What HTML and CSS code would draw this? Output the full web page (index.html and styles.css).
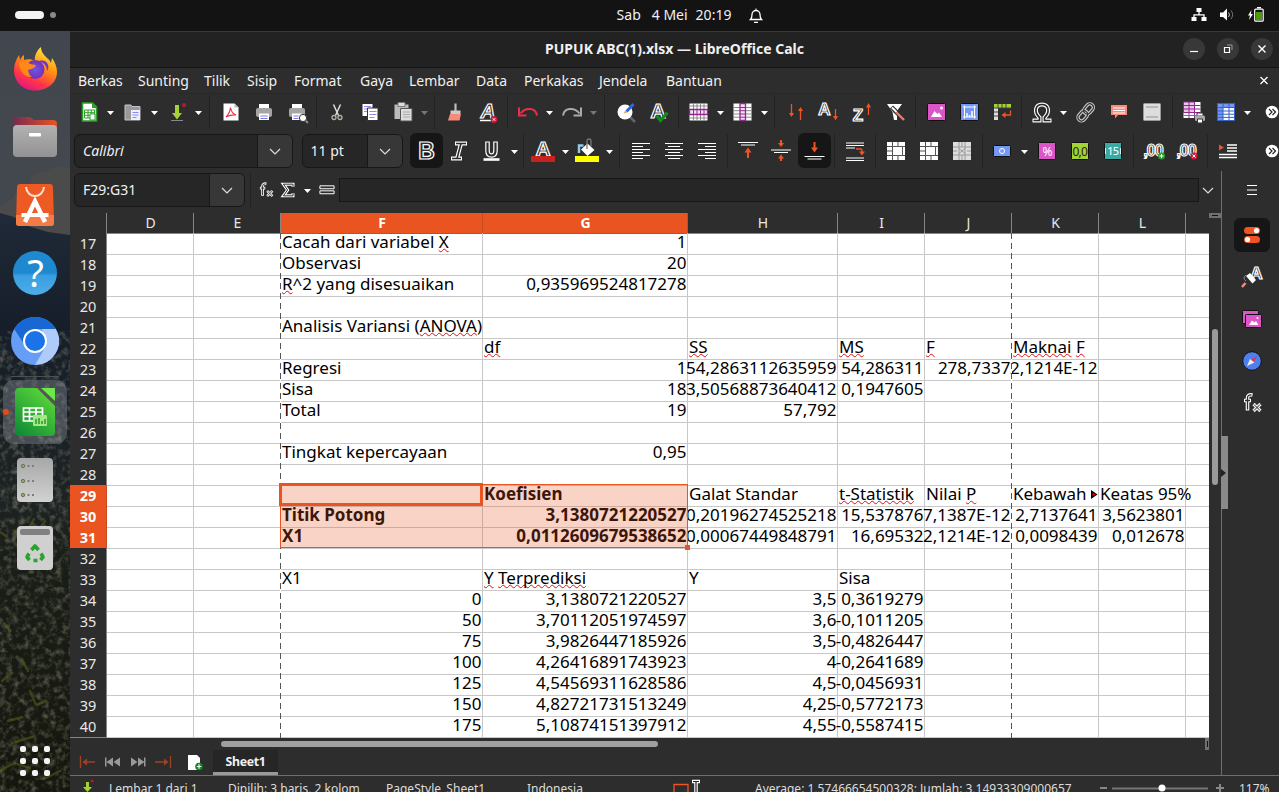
FILE: index.html
```
<!DOCTYPE html>
<html lang="id">
<head>
<meta charset="utf-8">
<title>PUPUK ABC(1).xlsx — LibreOffice Calc</title>
<link rel="stylesheet" href="styles.css">
</head>
<body>
<svg width="0" height="0" class="defs">
  <symbol id="dd" viewBox="0 0 11 24"><path d="M2 11h7l-3.500 4z" fill="currentColor"/></symbol>
  <symbol id="chev" viewBox="0 0 14 14"><path d="M2 5l5 5 5-5" fill="none" stroke="#ddd" stroke-width="1.200"/></symbol>
  <symbol id="merge" viewBox="0 0 24 24"><path d="M3 3h18v18H3z" fill="#fff"/><path d="M3 7.500h18M3 16.500h18M8.500 3v18M3 12h5.500M14 3v4.500M14 16.500V21M18.500 7.500v9" stroke="#555" fill="none"/><path d="M9 8h9v8H9z" fill="#fff"/></symbol>
  <symbol id="more" viewBox="0 0 14 14"><circle cx="7" cy="7" r="6.300" fill="#fff"/><path d="M4 4l3 3-3 3M7.500 4l3 3-3 3" fill="none" stroke="#222" stroke-width="1.200"/></symbol>
</svg>
<header class="topbar">
  <div class="pips"><i class="pill"></i><i class="dot"></i></div>
  <div class="clock"><span>Sab</span><span>4 Mei</span><span>20:19</span>
    <svg width="14" height="16" viewBox="0 0 14 16"><path d="M1.500 11.500h11c-1.500-1.500-1.500-3-1.500-5a4 4 0 0 0-8 0c0 2 0 3.500-1.500 5zM5 14.300h4" fill="none" stroke="#fff" stroke-width="1.300"/><path d="M7 .5v2" stroke="#fff"/></svg></div>
  <div class="tray">
    <svg width="16" height="16" viewBox="0 0 16 16"><path d="M5.500 1h5v4h-5zM.5 10h5v4h-5zM10.500 10h5v4h-5z" fill="#fff"/><path d="M8 5v3M3 10V7.800h10V10" fill="none" stroke="#fff" stroke-width="1.300"/></svg>
    <svg width="16" height="16" viewBox="0 0 16 16"><path d="M1 5.500h3L8 1.500v12L4 10H1z" fill="#fff"/><path d="M9.500 5.500q2 2.300 0 4.600" fill="none" stroke="#ccc"/><path d="M12 3.500q3.300 4.200 0 8.500" fill="none" stroke="#777"/></svg>
    <svg width="18" height="16" viewBox="0 0 18 16"><path d="M4.500 3L1 8.500h2L2 13l4-6H3.800z" fill="#fff"/><rect x="7.700" y="2.200" width="8.500" height="12" rx="1" fill="none" stroke="#fff" stroke-width="1.200"/><path d="M10 .7h4" stroke="#fff" stroke-width="1.500"/><path d="M9 5h6v8H9z" fill="#4e9a06"/></svg>
  </div>
</header>
<div class="desktop">
<aside class="dock">
  <svg class="wall" width="70" height="761" viewBox="0 0 70 761">
    <defs>
      <linearGradient id="sky" x1="0" y1="0" x2="0" y2="1"><stop offset="0" stop-color="#42474f"/><stop offset="1" stop-color="#4a4a4a"/></linearGradient>
      <linearGradient id="hill" x1="0" y1="0" x2="0" y2="1"><stop offset="0" stop-color="#202a38"/><stop offset=".2" stop-color="#161e2a"/><stop offset=".5" stop-color="#1d2323"/><stop offset=".6" stop-color="#1a1e18"/><stop offset="1" stop-color="#15160e"/></linearGradient>
      <filter id="noise" x="0" y="0" width="1" height="1"><feTurbulence type="fractalNoise" baseFrequency=".16" numOctaves="4" seed="4"/><feColorMatrix values="0 0 0 0 .25 0 0 0 0 .26 0 0 0 0 .17 1.300 0 0 0 -.58"/></filter>
    </defs>
    <rect width="70" height="761" fill="url(#sky)"/>
    <path d="M0 175q12-4 16-14 10 2 14-8 4-14 14-12 12-8 26-4v70H0z" fill="#4c4b4c"/>
    <path d="M0 182l14 4 14 9 20 6 22 3V761H0z" fill="url(#hill)"/>
    <rect y="300" width="70" height="461" filter="url(#noise)"/>
    <path d="M6 505l-6-4M14 500l8 6 10-3M34 488l-8 14 14-5 5-7M10 600l-6-8M2 650l10-8M30 660l6 14 10-4M8 690l14-4M12 712l20-6M0 740l14-8 16 5M44 748l16-8M28 640l-6-12" stroke="#525a18" stroke-width="2.500" stroke-linecap="round" fill="none" opacity=".6"/>
  </svg>
  <div class="dock-items">
  <div class="app"><svg width="48" height="48" viewBox="0 0 48 48">
    <defs><linearGradient id="ff" x1=".8" y1="0" x2=".3" y2="1"><stop offset="0" stop-color="#fff44f"/><stop offset=".4" stop-color="#ff980e"/><stop offset=".75" stop-color="#ff3647"/><stop offset="1" stop-color="#e31587"/></linearGradient><radialGradient id="fp"><stop offset="0" stop-color="#6b57e8"/><stop offset="1" stop-color="#7630b8"/></radialGradient></defs>
    <path d="M24 45.500C12 45.500 3 37 3 25c0-6 2-10 5-15l1 5c1-2 2-4 4-5v5c3-1 8-1 11 1-1-5 2-11 6-14 0 5 3 8 6 11 2 1 3 3 4 5l1-5c3 4 5 9 5 14 0 11-10 18.500-22 18.500z" fill="url(#ff)"/><circle cx="24" cy="24.500" r="9.500" fill="url(#fp)"/><path d="M8 18c5-2 8-2 11 1l6 1c-1 3-4 4-8 5 1 3 1 5 4 7-7 1-12-5-13-14z" fill="#ff8a16"/><path d="M26 17c5-1 10 3 10 9 4-5-1-14-10-9z" fill="#7a35c4"/></svg></div>
  <div class="app"><svg width="48" height="48" viewBox="0 0 48 48"><defs><linearGradient id="fo"><stop offset="0" stop-color="#772953"/><stop offset="1" stop-color="#e95420"/></linearGradient><linearGradient id="gr" x1="0" y1="0" x2="0" y2="1"><stop offset="0" stop-color="#b2b2b2"/><stop offset="1" stop-color="#929292"/></linearGradient></defs><path d="M2 8q0-4 4-4h13l4 3h19q4 0 4 4v12H2z" fill="url(#fo)"/><rect x="2" y="12" width="44" height="32" rx="4" fill="url(#gr)"/><rect x="18" y="20" width="12" height="3.500" rx="1" fill="#fff"/></svg></div>
  <div class="app"><svg width="48" height="48" viewBox="0 0 48 48"><path d="M9 3h30q3 0 3 4l1 35q0 3-3 3H8q-3 0-3-3L6 7q0-4 3-4z" fill="#ee5a24"/><path d="M5 34h38v8q0 3-3 3H8q-3 0-3-3z" fill="#f57b45"/><path d="M15 6c1 12 17 12 18 0" fill="none" stroke="#ffe0d0" stroke-width="2"/><path d="M14 41L24 20.500 34 41" fill="none" stroke="#fff" stroke-width="4.500"/><path d="M10.500 34h27" stroke="#fff" stroke-width="4"/></svg></div>
  <div class="app"><svg width="48" height="48" viewBox="0 0 48 48"><defs><linearGradient id="he" x1="0" y1="0" x2="0" y2="1"><stop offset=".5" stop-color="#1f89d0"/><stop offset=".56" stop-color="#3a9ee0"/><stop offset="1" stop-color="#4caee8"/></linearGradient></defs><circle cx="24" cy="24" r="22" fill="url(#he)"/><text x="24.500" y="37.500" text-anchor="middle" class="qmark">?</text></svg></div>
  <div class="app"><svg width="48" height="48" viewBox="0 0 48 48"><circle cx="24" cy="24" r="24" fill="#669df6"/><path d="M3.200 12A24 24 0 0 1 44.800 12H24L13 27z" fill="#1967d2"/><path d="M44.800 12A24 24 0 0 1 24 48L35 29 31 12z" fill="#aecbfa"/><circle cx="24" cy="24" r="12" fill="#fff"/><circle cx="24" cy="24" r="10" fill="#1a73e8"/></svg></div>
  <div class="app active"><svg width="48" height="48" viewBox="0 0 48 48"><defs><linearGradient id="lc" x1=".8" y1="0" x2=".1" y2="1"><stop offset="0" stop-color="#5fd93a"/><stop offset="1" stop-color="#0d8a35"/></linearGradient></defs><path d="M4 4q0-4 4-4h22l14 17v27q0 4-4 4H8q-4 0-4-4z" fill="url(#lc)"/><path d="M26 0l18 18v-5L31 0z" fill="#555"/><path d="M30 0h14v13z" fill="#6ee74a"/><path d="M12.500 20h19v13h-19zM12.500 24h19M12.500 28.500h19M18.500 20v13M25 20v13" fill="none" stroke="#fff" stroke-width="1.700"/><rect x="22" y="27" width="14" height="11" rx="1" fill="#a5e887"/><path d="M25 36v-5M28 36v-6M31 36v-3M34 36v-5" stroke="#23992f" stroke-width="1.500"/></svg></div>
  <div class="app"><svg width="48" height="48" viewBox="0 0 48 48"><defs><linearGradient id="gr2" x1="0" y1="0" x2="0" y2="1"><stop offset="0" stop-color="#a7a7a7"/><stop offset="1" stop-color="#d2d2d2"/></linearGradient></defs><rect x="6" y="2" width="36" height="44" rx="4" fill="url(#gr2)"/><g fill="#91a869" stroke="#6d7456"><circle cx="12" cy="10" r="1.700"/><circle cx="12" cy="25" r="1.700"/><circle cx="12" cy="39" r="1.700"/></g><path d="M16.500 10h2M21 10h2M16.500 25h2M21 25h2M16.500 39h2M21 39h2" stroke="#7d7d7d" stroke-width="1.800"/></svg></div>
  <div class="app"><svg width="48" height="48" viewBox="0 0 48 48"><rect x="6" y="2" width="36" height="44" rx="4" fill="#d0d0d0"/><rect x="9" y="5" width="30" height="6" rx="2" fill="#808080"/><path d="M20.500 26l3.500-4 3.500 4M30 29.500l2 3.500-2.500 3M18 29.500L16 33l2.500 3M26.500 36.500h-4" fill="none" stroke="#29a329" stroke-width="3.600" stroke-linejoin="round"/></svg></div>
  <div class="grid9"><i></i><i></i><i></i><i></i><i></i><i></i><i></i><i></i><i></i></div>
  </div>
</aside>
<main class="win">
  <div class="title"><b>PUPUK ABC(1).xlsx — LibreOffice Calc</b>
    <div class="wbtns"><i><svg width="10" height="10" viewBox="0 0 10 10"><path d="M1 7.500h8" stroke="#fff" stroke-width="1.200"/></svg></i><i><svg width="10" height="10" viewBox="0 0 10 10"><path d="M1.500 3.500h5v5h-5z" fill="none" stroke="#fff" stroke-width="1.200"/><path d="M4 1h5v5" fill="none" stroke="#999"/></svg></i><i><svg width="10" height="10" viewBox="0 0 10 10"><path d="M1.500 1.500l7 7M8.500 1.500l-7 7" stroke="#fff" stroke-width="1.400"/></svg></i></div></div>
  <nav class="menu"><span>Berkas</span><span>Sunting</span><span>Tilik</span><span>Sisip</span><span>Format</span><span>Gaya</span><span>Lembar</span><span>Data</span><span>Perkakas</span><span>Jendela</span><span>Bantuan</span><svg width="10" height="10" viewBox="0 0 10 10"><path d="M1.500 1l7 7M8.500 1l-7 7" stroke="#fff" stroke-width="1.300"/></svg></nav>

  <div class="bar bar1">
    <svg class="ic" viewBox="0 0 24 24"><path d="M5.500 3h10l4 4v14h-14z" fill="#fff" stroke="#2e9e2e" stroke-width="1.600"/><path d="M15 3v5h5z" fill="#2e9e2e"/><path d="M7.500 10h10v8h-10zM7.500 12.700h10M7.500 15.300h10M11 10v8M14.300 10v8" fill="none" stroke="#2e9e2e"/><path d="M13 14h5v6h-5z" fill="#fff" stroke="#2e9e2e"/></svg><svg class="dd"><use href="#dd"/></svg>
    <svg class="ic" viewBox="0 0 24 24"><path d="M4 5h6l1 1.500h8V20H4z" fill="#999" stroke="#c4c4c4"/><path d="M10 10h9v10h-9z" fill="#eef"/><path d="M11.500 12.500h6M11.500 15h6M11.500 17.500h4" stroke="#8a8af0"/></svg><svg class="dd"><use href="#dd"/></svg>
    <svg class="ic" viewBox="0 0 24 24"><path d="M10 5h4v8h3l-5 6.500L7 13h3z" fill="#a2d234"/><path d="M6 20.500h12" stroke="#888"/><circle cx="19" cy="5" r="2" fill="#c01530"/></svg><svg class="dd"><use href="#dd"/></svg>
    <i class="sep s10"></i>
    <svg class="ic" viewBox="0 0 24 24"><path d="M4.500 3.500h11l4 4v13h-15z" fill="#fff"/><path d="M15.500 3.500v4h4z" fill="#bbb"/><path d="M7 17q4-4 4.500-9.500 1 6 5.500 7.500-5-.5-10 2" fill="none" stroke="#e8304a" stroke-width="1.200"/></svg>
    <svg class="ic" viewBox="0 0 24 24"><path d="M7 4h10v5H7z" fill="#fff"/><rect x="4" y="8" width="16" height="9" rx="2" fill="#a5a5a5"/><path d="M7 13.500h10V20H7z" fill="#fff"/><path d="M8.500 16h7M8.500 18.500h7" stroke="#7b7be8"/></svg>
    <svg class="ic" viewBox="0 0 24 24"><path d="M7 4h10v5H7z" fill="#fff"/><rect x="4" y="8" width="16" height="9" rx="2" fill="#a5a5a5"/><path d="M7 13.500h10V20H7z" fill="#fff"/><path d="M8.500 16h5M8.500 18.500h5" stroke="#7b7be8"/><path d="M19 19l4 4" stroke="#888" stroke-width="2"/><circle cx="18" cy="18" r="3.600" fill="#fff" stroke="#333"/></svg>
    <i class="sep s7"></i>
    <svg class="ic" viewBox="0 0 24 24"><path d="M8.500 4.500l5 11M15.500 4.500l-5 11" stroke="#ddd" stroke-width="1.500"/><circle cx="9" cy="17.500" r="2" fill="none" stroke="#b8b0a0" stroke-width="1.300"/><circle cx="15" cy="17.500" r="2" fill="none" stroke="#b8b0a0" stroke-width="1.300"/></svg>
    <svg class="ic" viewBox="0 0 24 24"><path d="M4.500 4h10v12h-10z" fill="#fff"/><path d="M6 6.500h7M6 9h4M6 11.500h3" stroke="#8a8af0"/><path d="M9.500 8h10.500v12.500H9.500z" fill="#fff" stroke="#333"/><path d="M11.500 11.500h7M11.500 14.500h7M11.500 17.500h5" stroke="#8a8af0"/></svg>
    <svg class="ic" viewBox="0 0 24 24"><path d="M3.500 4.500h14V19h-14z" fill="#bbb"/><path d="M7 2.500h7v4H7z" fill="#ddd" stroke="#777"/><path d="M9.500 8.500h11.500V21H9.500z" fill="#ddd" stroke="#555"/><path d="M12 12h7M12 14.500h7M12 17h7" stroke="#aaa"/></svg><svg class="dd dim"><use href="#dd"/></svg>
    <i class="sep s8"></i>
    <svg class="ic" viewBox="0 0 24 24"><path d="M12.500 3.500v8" stroke="#bbb" stroke-width="2.200"/><path d="M7.500 10.500h10v3.500h-10z" fill="#ccc"/><path d="M7 14h11l-1.500 6.500H5z" fill="#f78a78"/></svg>
    <svg class="ic" viewBox="0 0 24 24"><text x="12" y="18" text-anchor="middle" class="ol oi">A</text><path d="M4 20.500h12" stroke="#fff" stroke-width="1.500"/><circle cx="18" cy="19.500" r="3.400" fill="#d0183a"/><path d="M16.800 18.300l2.400 2.400M19.200 18.300l-2.400 2.400" stroke="#fff"/></svg>
    <i class="sep s7"></i>
    <svg class="ic" viewBox="0 0 24 24"><path d="M21 15.500C20 8 10 6.500 4.500 13.500" fill="none" stroke="#e8304a" stroke-width="2"/><path d="M3 7.500v8h7.500" fill="none" stroke="#e8304a" stroke-width="2"/></svg><svg class="dd"><use href="#dd"/></svg>
    <svg class="ic" viewBox="0 0 24 24"><path d="M3 15.500C4 8 14 6.500 19.500 13.500" fill="none" stroke="#aaa" stroke-width="2"/><path d="M21 7.500v8h-7.500" fill="none" stroke="#aaa" stroke-width="2"/></svg><svg class="dd dim"><use href="#dd"/></svg>
    <i class="sep s10"></i>
    <svg class="ic" viewBox="0 0 24 24"><path d="M16 17l5 5" stroke="#666" stroke-width="2.500"/><circle cx="11" cy="12" r="7.500" fill="#fff"/><path d="M19.500 4l-7 7.500" stroke="#2f66e0" stroke-width="3"/><path d="M10 13.500l1-3 2 2z" fill="#e0a030"/></svg>
    <svg class="ic" viewBox="0 0 24 24"><text x="11" y="18" text-anchor="middle" class="ol o20">A</text><path d="M9.500 15.500l4 5 7-8" fill="none" stroke="#118a22" stroke-width="3.200"/></svg>
    <i class="sep s7"></i>
    <svg class="ic" viewBox="0 0 24 24"><path d="M2.500 3.500h18v17h-18z" fill="#fff"/><path d="M6.500 3.500v17M10 3.500v17M13.500 3.500v17M17 3.500v17M2.500 6h18M2.500 18h18" stroke="#888"/><path d="M2.500 9.500h18v5h-18z" fill="#f5e0f5" stroke="#92278f" stroke-width="1.300"/><path d="M6.500 9.500v5M10 9.500v5M13.500 9.500v5M17 9.500v5" stroke="#92278f"/></svg><svg class="dd"><use href="#dd"/></svg>
    <svg class="ic" viewBox="0 0 24 24"><path d="M2.500 3.500h18v17h-18z" fill="#fff"/><path d="M2.500 7.500h18M2.500 10.700h18M2.500 14h18M2.500 17.200h18" stroke="#888"/><path d="M9 3.500h5.500v17H9z" fill="#f5e0f5" stroke="#92278f" stroke-width="1.300"/><path d="M9 7.500h5.500M9 10.700h5.500M9 14h5.500M9 17.200h5.500" stroke="#92278f"/></svg><svg class="dd"><use href="#dd"/></svg>
    <i class="sep s9"></i>
    <svg class="ic" viewBox="0 0 24 24"><path d="M7.500 4v11M16.500 20V9" stroke="#f05423" stroke-width="1.300"/><path d="M5 13l2.500 4 2.500-4zM14 11l2.500-4 2.500 4z" fill="#f05423"/></svg>
    <svg class="ic" viewBox="0 0 24 24"><text x="7.500" y="14.500" text-anchor="middle" class="ol o17">A</text><path d="M18.500 9v8" stroke="#f05423" stroke-width="1.300"/><path d="M16 16l2.500 4.500 2.500-4.500z" fill="#f05423"/></svg>
    <svg class="ic" viewBox="0 0 24 24"><text x="8" y="21" text-anchor="middle" class="ol o17">Z</text><path d="M18.500 15V7" stroke="#f05423" stroke-width="1.300"/><path d="M16 7.500L18.500 3 21 7.500z" fill="#f05423"/></svg>
    <svg class="ic" viewBox="0 0 24 24"><path d="M4 4h15l-5 7v9h-3l-1.500-8z" fill="#fff"/><path d="M11 10l3 3 7 7" stroke="#2d2d2d" stroke-width="4"/><path d="M13 12l8 8" stroke="#f07868" stroke-width="2.400"/><path d="M8.500 7l5 5" stroke="#333" stroke-width="4.500"/><path d="M9 7.500l4.500 4.500" stroke="#fff" stroke-width="2"/></svg>
    <i class="sep s8"></i>
    <svg class="ic" viewBox="0 0 24 24"><rect x="3.500" y="3.500" width="18" height="17" rx="1" fill="#dc55c8" stroke="#111"/><path d="M7 17l3.500-6 3 3 1.500-1.500 3 4.500z" fill="#fff"/><circle cx="17.500" cy="8" r="1.500" fill="#fff"/></svg>
    <svg class="ic" viewBox="0 0 24 24"><rect x="3.500" y="3.500" width="18" height="17" rx="1" fill="#7398f5" stroke="#111"/><path d="M6 7h13M6 17h13M7.500 5.500v13M17.500 5.500v13" stroke="#fff"/><path d="M10 17v-4M12.500 17v-2M15 17v-6" stroke="#fff" stroke-width="1.500"/></svg>
    <svg class="ic" viewBox="0 0 24 24"><path d="M4 4h17v4H4z" fill="#a2d234"/><path d="M4 8h4v12H4z" fill="#ddd"/><path d="M8 4v4M12 4v4M16 4v4M4 8h17M4 12h4M4 16h4" stroke="#444"/><path d="M20.500 10.500v4.500H14" fill="none" stroke="#f05423" stroke-width="1.300"/><path d="M15.500 12v6l-4-3z" fill="#f05423"/></svg>
    <i class="sep s7"></i>
    <svg class="ic" viewBox="0 0 24 24"><path d="M2.500 20.500h7v-3c-6-5.500-4-13 2.500-13s8.500 7.500 2.500 13v3h7" fill="none" stroke="#fff" stroke-width="4"/><path d="M3.500 20.500h6v-3c-6-5.500-4-13 2.500-13s8.500 7.500 2.500 13v3h6" fill="none" stroke="#2a2a2a" stroke-width="1.700"/></svg><svg class="dd"><use href="#dd"/></svg>
    <svg class="ic" viewBox="0 0 24 24"><g transform="rotate(-50 12 12)" fill="none" stroke="#ccc" stroke-width="3.400"><rect x="1.500" y="8.500" width="11" height="7" rx="3.500"/><rect x="10.500" y="8.500" width="11" height="7" rx="3.500"/><g stroke="#333" stroke-width="1.200"><rect x="1.500" y="8.500" width="11" height="7" rx="3.500"/><rect x="10.500" y="8.500" width="11" height="7" rx="3.500"/></g></g></svg>
    <svg class="ic" viewBox="0 0 24 24"><path d="M4 5h16v10h-9l-3 3.500V15H4z" fill="#f78a78"/><path d="M6 8h12M6 10.500h12M6 13h12" stroke="#fff"/></svg>
    <svg class="ic" viewBox="0 0 24 24"><rect x="3.500" y="3.500" width="17" height="17" rx="1" fill="#ddd" stroke="#999"/><path d="M6 7h12M6 17h12" stroke="#aaa" stroke-width="1.500"/></svg>
    <i class="sep s8"></i>
    <svg class="ic" viewBox="0 0 24 24"><path d="M2.500 2h17v16h-17z" fill="#fff"/><path d="M2.500 2h11v10.500h-11z" fill="#e9c5ea" stroke="#92278f"/><path d="M2.500 5.500h17M2.500 9h17M2.500 12.500h17M8 2v16M13.500 2v16" stroke="#92278f"/><path d="M2.500 15.500h17" stroke="#777"/><path d="M16 13h6v3h-6z" fill="#fff" stroke="#333"/><rect x="14" y="15.500" width="10" height="5.500" rx="1.500" fill="#aaa"/><path d="M16.500 19h5v4h-5z" fill="#fff" stroke="#333"/></svg>
    <svg class="ic" viewBox="0 0 24 24"><path d="M3.500 3.500h17v17h-17z" fill="#fff"/><path d="M3.500 3.500h17v4h-17zM3.500 3.500h5.500v17H3.500z" fill="#7398f5"/><path d="M3.500 3.500h17v17h-17zM3.500 7.500h17M3.500 11h17M3.500 14.200h17M3.500 17.400h17M9 3.500v17M15 3.500v17" fill="none" stroke="#3560c8"/></svg><svg class="dd"><use href="#dd"/></svg>
    <svg class="more"><use href="#more"/></svg>
  </div>

  <div class="bar bar2">
    <div class="combo font"><em>Calibri</em><i><svg width="14" height="14"><use href="#chev"/></svg></i></div>
    <div class="combo size"><span>11 pt</span><i><svg width="14" height="14"><use href="#chev"/></svg></i></div>
    <svg class="ic on" viewBox="0 0 24 24"><text x="12" y="20" text-anchor="middle" class="ol o22">B</text></svg>
    <svg class="ic" viewBox="0 0 24 24"><path d="M8 4.500h12M4 19.500h11M14 4.500L10 19.500" stroke="#fff" stroke-width="4"/><path d="M9 4.500h10M5 19.500h9M14 4.500L10 19.500" stroke="#2d2d2d" stroke-width="1.600"/></svg>
    <svg class="ic" viewBox="0 0 24 24"><path d="M7.500 2.500v9q0 5 4 5t4-5v-9" fill="none" stroke="#fff" stroke-width="4.600"/><path d="M7.500 3.500v8q0 5 4 5t4-5v-8" fill="none" stroke="#2d2d2d" stroke-width="2.200"/><path d="M3.500 20.500h16" stroke="#fff" stroke-width="2.600"/></svg><svg class="dd"><use href="#dd"/></svg>
    <i class="sep s7"></i>
    <svg class="ic" viewBox="0 0 24 24"><text x="12" y="17" text-anchor="middle" class="ol o20">A</text><path d="M0 17h24v6H0z" fill="#c9211e"/></svg><svg class="dd"><use href="#dd"/></svg>
    <svg class="ic" viewBox="0 0 24 24"><path d="M4 14V6.500h4.500" stroke="#8ecbea" stroke-width="2.500" fill="none"/><path d="M6 10.500l6.500-6 7 6.500-7 6z" fill="#fff"/><path d="M12 10V2q0-2 2-2t2 2v5" fill="none" stroke="#777" stroke-width="1.300"/><path d="M0 17h24v6H0z" fill="#ff0"/></svg><svg class="dd"><use href="#dd"/></svg>
    <i class="sep s10"></i>
    <svg class="ic" viewBox="0 0 24 24"><path d="M3 4.500h18M3 7.500h11M3 10.500h18M3 13.500h11M3 16.500h18M3 19.500h11" stroke="#fff" stroke-width="1.200"/></svg>
    <svg class="ic" viewBox="0 0 24 24"><path d="M3 4.500h18M6 7.500h12M3 10.500h18M6 13.500h12M3 16.500h18M6 19.500h12" stroke="#fff" stroke-width="1.200"/></svg>
    <svg class="ic" viewBox="0 0 24 24"><path d="M3 4.500h18M10 7.500h11M3 10.500h18M10 13.500h11M3 16.500h18M10 19.500h11" stroke="#fff" stroke-width="1.200"/></svg>
    <i class="sep s8"></i>
    <svg class="ic" viewBox="0 0 24 24"><path d="M2 3.500h20M5 6h14" stroke="#fff" stroke-width="1.200"/><path d="M12 19v-6" stroke="#f05423" stroke-width="2"/><path d="M8.500 13.500L12 8.500l3.500 5z" fill="#f05423"/></svg>
    <svg class="ic" viewBox="0 0 24 24"><path d="M2 11h20M5 13.500h14" stroke="#fff" stroke-width="1.200"/><path d="M12 1v4M12 22v-4" stroke="#f05423" stroke-width="2"/><path d="M9 4l3 4 3-4zM9 19.500l3-4 3 4z" fill="#f05423"/></svg>
    <svg class="ic on" viewBox="0 0 24 24"><path d="M2 18h20M5 20.500h14" stroke="#fff" stroke-width="1.200"/><path d="M12 3.500v6" stroke="#f05423" stroke-width="2"/><path d="M8.500 9l3.500 5 3.500-5z" fill="#f05423"/></svg>
    <i class="sep s8"></i>
    <svg class="ic" viewBox="0 0 24 24"><path d="M3 4h18M3 6.500h18M3 9h9M3 19h18M3 21.500h18" stroke="#fff" stroke-width="1.200"/><path d="M13 10h5q1 0 1 3" fill="none" stroke="#f05423" stroke-width="1.500"/><path d="M16 12.500h6l-3 4z" fill="#f05423"/></svg>
    <i class="sep s8"></i>
    <svg class="ic" viewBox="0 0 24 24"><use href="#merge"/></svg>
    <svg class="ic" viewBox="0 0 24 24"><use href="#merge"/></svg>
    <svg class="ic" viewBox="0 0 24 24"><path d="M3 3h18v18H3z" fill="#ddd"/><path d="M3 8h18M3 16h18M9 3v18M15 3v18M12 3v5M12 16v5M3 12h4M17 12h4" stroke="#999"/><path d="M9 9.500l3 2.500-3 2.500M15 9.500L12 12l3 2.500" fill="none" stroke="#999"/></svg>
    <i class="sep s7"></i>
    <svg class="ic" viewBox="0 0 24 24"><rect x="3.500" y="6.500" width="17" height="11" rx="1" fill="#7398f5" stroke="#111"/><circle cx="12" cy="12" r="2.500" fill="none" stroke="#fff"/></svg><svg class="dd"><use href="#dd"/></svg>
    <svg class="ic nudge" viewBox="0 0 24 24"><rect x="3.500" y="3.500" width="17" height="17" rx="1" fill="#dc55c8" stroke="#111"/><text x="12" y="17" text-anchor="middle" class="it w">%</text></svg>
    <svg class="ic" viewBox="0 0 24 24"><rect x="3.500" y="3.500" width="17" height="17" rx="1" fill="#a2d234" stroke="#111"/><text x="11.700" y="16.500" text-anchor="middle" class="it">0,0</text></svg>
    <svg class="ic" viewBox="0 0 24 24"><rect x="3.500" y="3.500" width="17" height="17" rx="1" fill="#3aaaa5" stroke="#111"/><text x="11.700" y="16" text-anchor="middle" class="it w sm">15</text><path d="M4.500 9v6M19.500 9v6" stroke="#fff" stroke-width=".8"/></svg>
    <i class="sep s8"></i>
    <svg class="ic" viewBox="0 0 24 24"><text x="11" y="17" text-anchor="middle" class="ol oz">,00</text><circle cx="19.500" cy="17" r="3.500" fill="#28a028"/><path d="M17.500 17h4M19.500 15v4" stroke="#fff"/></svg>
    <svg class="ic" viewBox="0 0 24 24"><text x="11" y="17" text-anchor="middle" class="ol oz">,00</text><circle cx="19" cy="17" r="3.500" fill="#d0183a"/><path d="M17.500 15.500l3 3M20.500 15.500l-3 3" stroke="#fff"/></svg>
    <i class="sep s8"></i>
    <svg class="ic" viewBox="0 0 24 24"><path d="M11 6h10M11 9h10M11 12h10M3 15.500h18M3 18.500h18" stroke="#fff" stroke-width="1.300"/><path d="M3 5.500l5 3-5 3z" fill="#f05423"/></svg>
    <svg class="more"><use href="#more"/></svg>
  </div>

  <div class="work">
    <section class="left">
      <div class="bar bar3">
        <div class="combo name"><span>F29:G31</span><i><svg width="14" height="14"><use href="#chev"/></svg></i></div>
        <i class="sep s10"></i>
        <svg class="fi" viewBox="0 0 22 24"><use href="#fx"/></svg>
        <svg class="fi" viewBox="0 0 22 24"><path d="M17 8V5H5.500l5 7-5 7H17v-3" fill="none" stroke="#fff" stroke-width="3.600"/><path d="M17 8V5H5.500l5 7-5 7H17v-3" fill="none" stroke="#2d2d2d" stroke-width="1.200"/></svg>
        <svg class="dd"><use href="#dd"/></svg>
        <svg class="fi eq" viewBox="0 0 22 24"><path d="M2.500 7h17v3.500h-17zM2.500 13h17v3.500h-17z" fill="none" stroke="#fff" stroke-width="1.200"/></svg>
        <div class="input"></div>
        <svg width="14" height="14" class="ex"><use href="#chev"/></svg>
      </div>
      <div class="sheetrow">
        <div class="sheet">
          <div class="row head"><b></b><b>D</b><b>E</b><b class="s">F</b><b class="s">G</b><b>H</b><b>I</b><b>J</b><b>K</b><b>L</b><b></b></div>
          <div class="row"><b>17</b><p></p><p></p><p>Cacah dari variabel&nbsp;<u>X</u></p><p class="n">1</p><p></p><p></p><p></p><p></p><p></p><p></p></div>
          <div class="row"><b>18</b><p></p><p></p><p>Observasi</p><p class="n">20</p><p></p><p></p><p></p><p></p><p></p><p></p></div>
          <div class="row"><b>19</b><p></p><p></p><p><u>R</u>^2 yang disesuaikan</p><p class="n">0,935969524817278</p><p></p><p></p><p></p><p></p><p></p><p></p></div>
          <div class="row"><b>20</b><p></p><p></p><p></p><p></p><p></p><p></p><p></p><p></p><p></p><p></p></div>
          <div class="row"><b>21</b><p></p><p></p><p>Analisis Variansi (<u>ANOVA</u>)</p><p></p><p></p><p></p><p></p><p></p><p></p><p></p></div>
          <div class="row"><b>22</b><p></p><p></p><p></p><p><u>df</u></p><p><u>SS</u></p><p><u>MS</u></p><p><u>F</u></p><p><u>Maknai</u>&nbsp;<u>F</u></p><p></p><p></p></div>
          <div class="row"><b>23</b><p></p><p></p><p>Regresi</p><p class="n">1</p><p class="n">54,2863112635959</p><p class="n">54,286311</p><p class="n">278,7337</p><p class="n">2,1214E-12</p><p></p><p></p></div>
          <div class="row"><b>24</b><p></p><p></p><p>Sisa</p><p class="n">18</p><p class="n">3,50568873640412</p><p class="n">0,1947605</p><p></p><p></p><p></p><p></p></div>
          <div class="row"><b>25</b><p></p><p></p><p>Total</p><p class="n">19</p><p class="n">57,792</p><p></p><p></p><p></p><p></p><p></p></div>
          <div class="row"><b>26</b><p></p><p></p><p></p><p></p><p></p><p></p><p></p><p></p><p></p><p></p></div>
          <div class="row"><b>27</b><p></p><p></p><p>Tingkat kepercayaan</p><p class="n">0,95</p><p></p><p></p><p></p><p></p><p></p><p></p></div>
          <div class="row"><b>28</b><p></p><p></p><p></p><p></p><p></p><p></p><p></p><p></p><p></p><p></p></div>
          <div class="row"><b class="s">29</b><p></p><p></p><p></p><p class="bd">Koefisien</p><p>Galat Standar</p><p><u>t-Statistik</u></p><p>Nilai&nbsp;<u>P</u></p><p class="cut"><span>Kebawah 95%</span><svg width="7" height="9" viewBox="0 0 7 9"><path d="M0 0l6.500 4.500L0 9z"/><path d="M1.500 3v3l3.500-1.500z" fill="red"/></svg></p><p>Keatas 95%</p><p></p></div>
          <div class="row"><b class="s">30</b><p></p><p></p><p class="bd">Titik Potong</p><p class="n bd">3,1380721220527</p><p class="n">0,20196274525218</p><p class="n">15,537876</p><p class="n">7,1387E-12</p><p class="n">2,7137641</p><p class="n">3,5623801</p><p></p></div>
          <div class="row"><b class="s">31</b><p></p><p></p><p class="bd">X1</p><p class="n bd">0,0112609679538652</p><p class="n">0,00067449848791</p><p class="n">16,69532</p><p class="n">2,1214E-12</p><p class="n">0,0098439</p><p class="n">0,012678</p><p></p></div>
          <div class="row"><b>32</b><p></p><p></p><p></p><p></p><p></p><p></p><p></p><p></p><p></p><p></p></div>
          <div class="row"><b>33</b><p></p><p></p><p>X1</p><p><u>Y</u>&nbsp;<u>Terprediksi</u></p><p>Y</p><p>Sisa</p><p></p><p></p><p></p><p></p></div>
          <div class="row"><b>34</b><p></p><p></p><p class="n">0</p><p class="n">3,1380721220527</p><p class="n">3,5</p><p class="n">0,3619279</p><p></p><p></p><p></p><p></p></div>
          <div class="row"><b>35</b><p></p><p></p><p class="n">50</p><p class="n">3,70112051974597</p><p class="n">3,6</p><p class="n">-0,1011205</p><p></p><p></p><p></p><p></p></div>
          <div class="row"><b>36</b><p></p><p></p><p class="n">75</p><p class="n">3,9826447185926</p><p class="n">3,5</p><p class="n">-0,4826447</p><p></p><p></p><p></p><p></p></div>
          <div class="row"><b>37</b><p></p><p></p><p class="n">100</p><p class="n">4,26416891743923</p><p class="n">4</p><p class="n">-0,2641689</p><p></p><p></p><p></p><p></p></div>
          <div class="row"><b>38</b><p></p><p></p><p class="n">125</p><p class="n">4,54569311628586</p><p class="n">4,5</p><p class="n">-0,0456931</p><p></p><p></p><p></p><p></p></div>
          <div class="row"><b>39</b><p></p><p></p><p class="n">150</p><p class="n">4,82721731513249</p><p class="n">4,25</p><p class="n">-0,5772173</p><p></p><p></p><p></p><p></p></div>
          <div class="row"><b>40</b><p></p><p></p><p class="n">175</p><p class="n">5,10874151397912</p><p class="n">4,55</p><p class="n">-0,5587415</p><p></p><p></p><p></p><p></p></div>
          <i class="brk b1"></i><i class="brk b2"></i>
          <i class="range"></i><i class="cursor"></i><i class="handle"></i>
        </div>
        <div class="vs"><i class="split"></i><i class="thumb"></i></div>
      </div>
      <div class="hs"><i class="thumb"></i><i class="hsplit"></i></div>
      <div class="tabs">
        <svg width="100" height="14" viewBox="0 0 100 14"><g stroke="#9c4224" fill="#9c4224" stroke-width="1.300"><path d="M1.500 1v12M4 7h12M91.500 1v12M76 7h12"/><path d="M8 3.500L3.500 7 8 10.500zM85 3.500L89.500 7 85 10.500z" stroke="none"/></g><g fill="#999"><path d="M26 2.500h1.500v9H26zM34 2.500v9L27.500 7zM41 2.500v9L34.500 7zM52 2.500v9L58.500 7zM59 2.500v9L65.500 7zM65 2.500h1.500v9H65z"/></g></svg>
        <svg class="add" width="16" height="18" viewBox="0 0 16 18"><path d="M1 2h9l3 3v12H1z" fill="#fff"/><circle cx="12" cy="13.500" r="3.800" fill="#118a22"/><path d="M9.800 13.500h4.400M12 11.300v4.400" stroke="#fff" stroke-width="1.200"/></svg>
        <b class="tab">Sheet1</b>
      </div>
    </section>
    <aside class="side">
      <svg viewBox="0 0 24 24"><path d="M7 7.500h10M7 12h10M7 16.500h10" stroke="#fff" stroke-width="1.200"/></svg>
      <svg class="on" viewBox="0 0 24 24"><rect x="4" y="4" width="16" height="7" rx="3.500" fill="#f05423"/><circle cx="16.500" cy="7.500" r="2.600" fill="#fff"/><rect x="4" y="13" width="16" height="7" rx="3.500" fill="#f05423"/><circle cx="7.500" cy="16.500" r="2.600" fill="#fff"/></svg>
      <svg viewBox="0 0 24 24"><text x="16.500" y="14" text-anchor="middle" class="ol o17">A</text><path d="M6 11l4-3 6 7-3.500 3.500z" fill="#fff"/><path d="M6 10q-4 3 0 6" fill="none" stroke="#888"/><path d="M5.500 18l-3.500 4" stroke="#f78a78" stroke-width="2.500"/></svg>
      <svg viewBox="0 0 24 24"><rect x="2.500" y="3.500" width="16" height="13" rx="1" fill="#dc55c8" stroke="#111"/><rect x="5.500" y="7.500" width="16" height="13" rx="1" fill="#dc55c8" stroke="#111"/><path d="M9 18l3-4.500 2.500 2L16 14l2.500 4z" fill="#fff"/><circle cx="17.500" cy="11" r="1" fill="#fff"/></svg>
      <svg viewBox="0 0 24 24"><circle cx="12" cy="12" r="9.300" fill="#4d80ee" stroke="#111"/><path d="M17 7l-3.500 6.500-3-2.500z" fill="#e8304a"/><path d="M7 17l3-7 4.500 3.500z" fill="#eee"/></svg>
      <svg viewBox="0 0 24 24"><symbol id="fx" viewBox="0 0 24 24"><path d="M12.500 4q-5-1-5 3v12.500M4 9.500h7" fill="none" stroke="#fff" stroke-width="3.600"/><path d="M11.500 4q-4-.5-4 3v11.500M5 9.500h5" fill="none" stroke="#2d2d2d" stroke-width="1.300"/><path d="M13.500 13l7 7M20.500 13l-7 7" stroke="#eee" stroke-width="3.200"/><path d="M14 13.500l6 6M20 13.500l-6 6" stroke="#2d2d2d" stroke-width="1"/></symbol><use href="#fx"/></svg>
      <i class="grip"><svg width="5" height="8" viewBox="0 0 5 8"><path d="M0 0l5 4-5 4z" fill="#222"/></svg></i>
    </aside>
  </div>
  <footer class="status">
    <svg width="14" height="14" viewBox="0 0 14 14" class="st0"><path d="M5 3h3v5h3l-4.500 5L2 8h3z" fill="#a2d234"/><circle cx="11" cy="2" r="1.500" fill="#c01530"/></svg>
    <span class="st1">Lembar 1 dari 1</span><span class="st2">Dipilih: 3 baris, 2 kolom</span><span class="st3">PageStyle_Sheet1</span><span class="st4">Indonesia</span>
    <span class="st5"><svg width="30" height="16" viewBox="0 0 30 16"><path d="M1 5.500h14v9H1z" fill="none" stroke="#f05423" stroke-width="1.300"/><path d="M19 2.500h8M23 2.500V16" stroke="#fff" stroke-width="3.500"/><path d="M20 2.500h6M23 2.500V16" stroke="#222" stroke-width="1.200"/></svg></span>
    <span class="st6">Average: 1,57466654500328; Jumlah: 3,14933309000657</span>
    <svg class="zoom" width="126" height="14" viewBox="0 0 126 14"><path d="M1 7h7M117 7h8M121 3v8" stroke="#888" stroke-width="2"/><path d="M13 7.500h96" stroke="#777" stroke-width="2"/><circle cx="63" cy="7" r="3.500" fill="#fff"/></svg>
    <span class="st7">117%</span>
  </footer>
</main>
</div>
</body>
</html>
```
FILE: styles.css
```
* { box-sizing: border-box; }
body { margin: 0; width: 1279px; height: 792px; overflow: hidden; background: #2d2d2d; color: #f0f0f0; font: 14px "Noto Sans", "Open Sans", sans-serif; display: flex; flex-direction: column; }
i { font-style: normal; display: block; }
p { margin: 0; }
.defs { position: absolute; }

.topbar { height: 31px; background: #131313; display: grid; grid-template-columns: 1fr auto 1fr; align-items: center; flex: none; }
.pips { display: flex; align-items: center; gap: 6px; padding: 0 0 1px 15px; }
.pill { width: 29px; height: 8px; border-radius: 4px; background: #f2f2f2; }
.dot { width: 6px; height: 6px; border-radius: 3px; background: #8a8a8a; }
.clock { display: flex; gap: 11px; align-items: center; padding: 0 0 3px 101px; letter-spacing: 0; }
.clock span:nth-child(2) { margin-right: -3px; }
.clock svg { margin: 3px 0 0 7px; }
.tray { display: flex; justify-content: flex-end; gap: 12px; padding: 0 14px 1px 0; }

.desktop { display: flex; height: 761px; flex: none; }
.dock { width: 70px; position: relative; flex: none; }
.wall { position: absolute; left: 0; top: 0; }
.dock-items { position: relative; display: flex; flex-direction: column; align-items: center; padding-top: 4px; }
.app { height: 68px; width: 64px; display: flex; align-items: center; justify-content: center; }
.app.active { height: 64px; margin: 5px 0 2px; background: rgba(150,155,165,.36); border-radius: 11px; position: relative; }
.app.active::before { content: ""; position: absolute; left: 0; top: 29px; width: 6px; height: 6px; border-radius: 3px; background: #e04a1c; }
.app.active::after { content: ""; position: absolute; left: 8px; right: 8px; top: -4px; height: 1px; background: #4b5054; }
.qmark { font: 38px "Noto Sans", sans-serif; fill: #fff; }
.grid9 { display: grid; grid-template-columns: repeat(3, 6px); gap: 6px; margin-top: 164px; }
.grid9 i { height: 6px; background: #f4f4f4; border-radius: 2px; }

.win { width: 1209px; flex: none; display: flex; flex-direction: column; background: #2d2d2d; overflow: hidden; }
.title { height: 37px; flex: none; background: #222; border-top: 1px solid #383838; border-bottom: 1px solid #141414; display: flex; align-items: center; justify-content: center; position: relative; font-size: 14px; padding-bottom: 2px; }
.wbtns { position: absolute; right: 6px; top: 6px; display: flex; gap: 12px; }
.wbtns i { width: 22px; height: 22px; border-radius: 11px; background: #383838; display: flex; align-items: center; justify-content: center; }
.menu { height: 25px; flex: none; display: grid; grid-template-columns: 60px 66px 43px 47px 66px 49px 67px 48px 75px 67px 1fr 10px; padding: 0 10px 0 8px; align-items: center; }

.bar { display: flex; align-items: center; height: 39px; padding-bottom: 2px; flex: none; }
.bar1 { padding-left: 2px; border-top: 1px solid #292929; }
.ic { width: 24px; height: 24px; margin: 0 4.500px; flex: none; overflow: visible; }
.ic.on { width: 33px; height: 35px; margin: 0; padding: 5.500px 4.500px; background: #161616; border-radius: 6px; }
.ic.nudge { margin-left: 5.500px; }
.dd { width: 11px; height: 24px; flex: none; color: #fff; }
.dim { color: #777; }
.sep { height: 34px; flex: none; background: linear-gradient(#222, #222) center / 1px 100% no-repeat; }
.s7 { width: 7px; } .s8 { width: 8px; } .s9 { width: 9px; } .s10 { width: 10px; }
.more { width: 14px; height: 14px; margin-left: auto; flex: none; }
.ol { font: bold 20px "Liberation Sans", sans-serif; fill: #2d2d2d; stroke: #fff; stroke-width: 1.200px; }
.oi { font-style: italic; }
.o17 { font-size: 17px; } .o20 { font-size: 21px; } .o22 { font-size: 23px; }
.oz { font-size: 16px; letter-spacing: -1px; }
.it { font: 12px "Noto Sans", sans-serif; fill: #222; letter-spacing: -.8px; }
.it.w { fill: #fff; } .it.sm { font-size: 11px; }

.combo { height: 34px; background: #262626; border: 1px solid #171717; border-radius: 6px; display: flex; align-items: center; padding-left: 8px; flex: none; overflow: hidden; }
.combo > i { height: 100%; width: 35px; margin-left: auto; background: #373737; border-left: 1px solid #171717; display: flex; align-items: center; justify-content: center; }
.font { width: 219px; margin-left: 4px; }
.size { width: 101px; margin: 0 7px 0 8.500px; }
.name { width: 171px; margin-left: 4px; }

.work { display: flex; height: 604px; flex: none; }
.left { width: 1151px; display: flex; flex-direction: column; }
.bar3 { height: 38px; margin-bottom: 4px; padding-bottom: 1px; }
.fi { width: 22px; height: 20px; flex: none; }
.bar3 .dd { margin: 0 3px; }
.input { flex: 1; height: 24px; margin-left: 1px; border: 1px solid #171717; background: #262626; }
.ex { margin: 0 6px 0 2px; }
.sheetrow { display: flex; height: 525px; flex: none; }
.sheet { width: 1139px; position: relative; background: #fff; color: #000; overflow: hidden; font-size: 17px; }
.row { display: grid; grid-template-columns: 37px 87px 87px 202px 205px 150px 87px 87px 87px 87px 23px; height: 21px; }
.row p { border-right: 1px solid #c8c8c8; border-bottom: 1px solid #c8c8c8; display: flex; white-space: pre; line-height: 17px; padding-left: 1px; min-width: 0; }
.row p:last-child { border-right: 0; }
.row p.n { justify-content: flex-end; padding: 0 .5px 0 0; }
.row > b { background: #2d2d2d; color: #e8e8e8; font-weight: 400; font-size: 14.500px; line-height: 21px; text-align: center; border-right: 1px solid #858585; border-bottom: 1px solid #858585; }
.row > b.s { background: #e95420; color: #fff; font-weight: 700; border-color: #c94a20; }
.row.head { height: 20px; }
.row.head > b { line-height: 20px; font-size: 14px; padding-left: 1px; }
.row.head > b:last-child { border-right: 0; }
.row u { text-decoration: underline wavy #e01010 1px; text-decoration-skip-ink: none; text-underline-offset: 0; }
.bd { font-weight: 700; }
.cut { position: relative; }
.cut span { width: 79px; overflow: hidden; height: 20px; }
.cut svg { position: absolute; right: 0; top: 5px; }
.brk { position: absolute; top: 20px; bottom: 0; width: 1px; background: repeating-linear-gradient(#555 0 6px, #fff 6px 10px); }
.b1 { left: 210px; } .b2 { left: 941px; }
.range { position: absolute; left: 210px; top: 271px; width: 408px; height: 64px; background: rgba(233,84,32,.26); border: 1px solid #e95420; }
.cursor { position: absolute; left: 209px; top: 270px; width: 204px; height: 23px; border: 3px solid #e95420; }
.handle { position: absolute; left: 615px; top: 332px; width: 5px; height: 5px; background: #e95420; }
.vs { width: 12px; }
.split { height: 5px; background: linear-gradient(#111, #111) center / 6px 1px no-repeat #707070; }
.vs .thumb { width: 6px; height: 156px; margin: 111px 0 0 3px; border-radius: 3px; background: #9a9a9a; }
.hs { height: 12px; flex: none; display: flex; justify-content: space-between; }
.hs .thumb { width: 437px; height: 6px; margin: 3px 0 0 151px; border-radius: 3px; background: #a0a0a0; }
.hsplit { width: 4px; margin-right: 12px; background: linear-gradient(#111, #111) center / 1px 6px no-repeat #707070; }
.tabs { height: 25px; flex: none; display: flex; align-items: center; padding-left: 9px; }
.tabs > svg { margin-bottom: 2px; }
.tabs > .add { margin-left: 8px; }
.tab { width: 65px; height: 25px; margin-left: 10px; background: #262626; border-bottom: 3px solid #999; text-align: center; font-size: 12.300px; line-height: 23px; letter-spacing: -.3px; }
.side { width: 58px; border-left: 1px solid #6f6f6f; position: relative; padding-top: 2px; display: flex; flex-direction: column; align-items: center; padding-left: 3px; }
.side > svg { width: 24px; height: 24px; margin: 5px 0 13px; overflow: visible; }
.side > svg.on { width: 36px; height: 34px; margin: 3px 0 8px; padding: 5px 6px; background: #161616; border-radius: 6px; }
.grip { position: absolute; left: -1px; top: 265px; width: 7px; height: 73px; background: #8a8a8a; display: flex; align-items: center; }
.status { height: 17px; flex: none; border-top: 1px solid #6f6f6f; position: relative; overflow: hidden; display: flex; font-size: 12px; line-height: 26px; color: #ddd; white-space: nowrap; padding-left: 11px; }
.st0 { margin-top: 3px; flex: none; }
.st1 { width: 119px; margin-left: 14px; } .st2 { width: 158px; } .st3 { width: 141px; } .st4 { width: 146px; }
.st5 { width: 82px; } .st5 svg { display: block; margin-top: 3px; } .st6 { width: 344px; } .zoom { margin-top: 5px; flex: none; } .st7 { margin-left: 14px; }
```
